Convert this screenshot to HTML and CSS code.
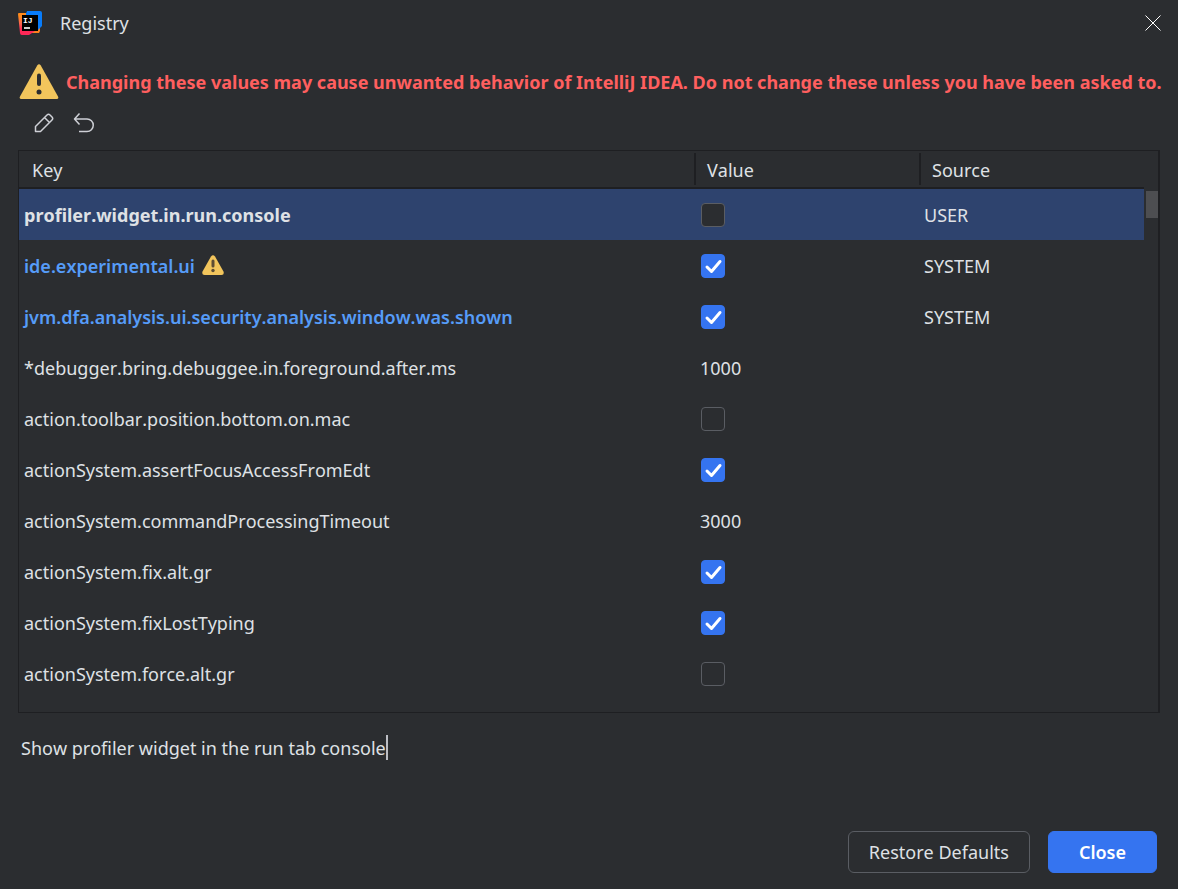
FILE: index.html
```
<!DOCTYPE html>
<html lang="en">
<head>
  <meta charset="UTF-8">
  <meta name="viewport" content="width=device-width, initial-scale=1.0">
  <title>Registry</title>
  <link rel="stylesheet" href="styles.css">
</head>
<body>
  <header class="titlebar">
    <svg class="logo" viewBox="0 0 24 24" aria-hidden="true">
      <defs>
        <linearGradient id="warm" x1="0" y1="0" x2="0" y2="1">
          <stop offset="0.15" stop-color="#ff8a1c"/>
          <stop offset="0.45" stop-color="#fb6a4c"/>
          <stop offset="0.75" stop-color="#fe2857"/>
        </linearGradient>
      </defs>
      <path d="M14 15h8v5l-1 2h-7z" fill="#fc801d"/>
      <path d="M9 0h13q2 0 2 2v13l-4 4L7 5z" fill="#087cfa"/>
      <path d="M0 3q0-1 1-1h7v18h9l-6 4H4q-2 0-2-2z" fill="url(#warm)"/>
      <rect x="4" y="4" width="16" height="16" fill="#000"/>
      <text class="logo-text" x="5" y="12">IJ</text>
      <rect x="6" y="16" width="6" height="2" fill="#ccc"/>
    </svg>
    <h1>Registry</h1>
    <button class="close-x" aria-label="Close window">
      <svg width="16" height="16" viewBox="0 0 16 16"><path d="M0.5 0.5l15 15M15.500 0.5l-15 15"/></svg>
    </button>
  </header>

  <main>
    <div class="warning">
      <svg width="40" height="36" viewBox="0 0 40 36" aria-hidden="true">
        <path d="M18.200 1.600q1.800-2.700 3.600 0L39 32.500q1.200 2.500-1.500 2.500h-35Q-0.200 35 1 32.500z" fill="#f2c55c"/>
        <path d="M20 11.500v8.500" stroke="#2b2d30" stroke-width="4" stroke-linecap="round"/>
        <circle cx="20" cy="28" r="2.500" fill="#2b2d30"/>
      </svg>
      <p>Changing these values may cause unwanted behavior of IntelliJ IDEA. Do not change these unless you have been asked to.</p>
    </div>

    <div class="toolbar">
      <button aria-label="Edit">
        <svg width="24" height="24" viewBox="0 0 24 24"><path d="M3.500 20.500v-5L15 4q1.500-1.500 3 0l2 2q1.500 1.500 0 3L8.500 20.500zM12.500 6.500l5 5"/></svg>
      </button>
      <button aria-label="Revert">
        <svg width="24" height="24" viewBox="0 0 24 24"><path d="M7.500 2.500L2.500 8l5 5.500M2.500 8H15a6.200 6.200 0 0 1 0 12.500H7"/></svg>
      </button>
    </div>

    <div class="registry">
      <table>
        <thead>
          <tr><th>Key</th><th>Value</th><th>Source</th></tr>
        </thead>
        <tbody>
          <tr class="selected">
            <td><label class="changed" for="k1">profiler.widget.in.run.console</label></td>
            <td><input type="checkbox" id="k1"></td>
            <td>USER</td>
          </tr>
          <tr>
            <td>
              <label class="changed" for="k2">ide.experimental.ui</label>
              <svg class="row-icon" width="22" height="20" viewBox="0 0 22 20" aria-hidden="true">
                <path d="M9 1.500q2-2.500 4 0l8.500 15q1 3.500-2 3.500h-17q-3 0-2-3.500z" fill="#f2c55c"/>
                <path d="M11 6v5" stroke="#5e4d33" stroke-width="3" stroke-linecap="round"/>
                <circle cx="11" cy="15.500" r="1.700" fill="#5e4d33"/>
              </svg>
            </td>
            <td><input type="checkbox" id="k2" checked></td>
            <td>SYSTEM</td>
          </tr>
          <tr>
            <td><label class="changed" for="k3">jvm.dfa.analysis.ui.security.analysis.window.was.shown</label></td>
            <td><input type="checkbox" id="k3" checked></td>
            <td>SYSTEM</td>
          </tr>
          <tr>
            <td>*debugger.bring.debuggee.in.foreground.after.ms</td>
            <td>1000</td>
            <td></td>
          </tr>
          <tr>
            <td><label for="k5">action.toolbar.position.bottom.on.mac</label></td>
            <td><input type="checkbox" id="k5"></td>
            <td></td>
          </tr>
          <tr>
            <td><label for="k6">actionSystem.assertFocusAccessFromEdt</label></td>
            <td><input type="checkbox" id="k6" checked></td>
            <td></td>
          </tr>
          <tr>
            <td>actionSystem.commandProcessingTimeout</td>
            <td>3000</td>
            <td></td>
          </tr>
          <tr>
            <td><label for="k8">actionSystem.fix.alt.gr</label></td>
            <td><input type="checkbox" id="k8" checked></td>
            <td></td>
          </tr>
          <tr>
            <td><label for="k9">actionSystem.fixLostTyping</label></td>
            <td><input type="checkbox" id="k9" checked></td>
            <td></td>
          </tr>
          <tr>
            <td><label for="k10">actionSystem.force.alt.gr</label></td>
            <td><input type="checkbox" id="k10"></td>
            <td></td>
          </tr>
        </tbody>
      </table>
      <div class="scrollbar"><div class="thumb"></div></div>
    </div>

    <p class="description">Show profiler widget in the run tab console<span class="caret"></span></p>
  </main>

  <footer class="actions">
    <button class="btn">Restore Defaults</button>
    <button class="btn primary">Close</button>
  </footer>
</body>
</html>
```

FILE: styles.css
```
* { box-sizing: border-box; }
body { margin: 0; min-height: 100vh; display: flex; flex-direction: column; background: #2b2d30; color: #dfe1e5; font-family: "Noto Sans", "Open Sans", sans-serif; font-size: 18px; line-height: 24px; font-kerning: none; }
h1, p { margin: 0; }
button { font: inherit; font-kerning: none; color: inherit; background: none; border: none; padding: 0; cursor: pointer; }
svg { display: block; }

.titlebar { display: flex; align-items: center; height: 46px; padding: 0 17px 0 18px; }
.titlebar h1 { flex: 1; margin-left: 18px; font-size: 18px; font-weight: 400; }
.logo { width: 24px; height: 24px; }
.logo-text { font: bold 8px "Liberation Mono", monospace; fill: #fff; }
.close-x path { fill: none; stroke: #fff; stroke-width: 1; }

main { flex: 1; padding: 17px 18px 0; }
.warning { display: flex; align-items: center; gap: 7px; height: 38px; padding-left: 1px; color: #ff5f5f; font-weight: 700; font-kerning: normal; white-space: nowrap; }
.warning svg { flex: none; }
.toolbar { display: flex; gap: 16px; padding: 10px 14px 15px; }
.toolbar path { fill: none; stroke: #ced0d6; stroke-width: 1.5; stroke-linejoin: round; }

.registry { display: flex; padding-bottom: 13px; border: 1px solid #1e1f22; border-right-width: 2px; }
table { flex: 1; table-layout: fixed; border-collapse: separate; border-spacing: 0; }
th { width: 20%; height: 38px; padding: 2px 13px 0; text-align: left; font-weight: 400; border-bottom: 2px solid #1e1f22; background: linear-gradient(#1e1f22, #1e1f22) left 2px / 2px 32px no-repeat; }
th:first-child { width: 60%; background: none; }
td { height: 51px; padding: 0 5px; white-space: nowrap; }
td:nth-child(2) { padding-left: 6px; }
.selected { background: #2e436e; }
.changed { color: #569cf8; font-weight: 600; }
.selected .changed { color: #dfe1e5; font-weight: 700; }
.row-icon { display: inline-block; margin-left: 2px; vertical-align: -2px; }
.scrollbar { width: 14px; padding: 40px 0 0 2px; }
.thumb { height: 27px; background: #4d4e51; }

input[type="checkbox"] { appearance: none; display: block; width: 24px; height: 24px; margin: 0 1px; border: 1px solid #5a5d63; border-radius: 4px; background: #2b2d30; }
input[type="checkbox"]:checked { border-color: #3574f0; background: #3574f0 url("data:image/svg+xml,%3Csvg xmlns='http://www.w3.org/2000/svg' viewBox='0 0 22 22'%3E%3Cpath d='M5 12l4.500 4.500L18 6.500' fill='none' stroke='white' stroke-width='3' stroke-linecap='round' stroke-linejoin='round'/%3E%3C/svg%3E") center / 22px no-repeat; }

.description { display: flex; align-items: center; padding: 22px 3px 0; }
.caret { width: 2px; height: 25px; background: #bcbec4; }

.actions { display: flex; justify-content: flex-end; gap: 18px; padding: 16px 21px 16px; }
.btn { height: 42px; padding: 0 20px; border: 1px solid #5a5d63; border-radius: 6px; }
.primary { padding: 0 30px; border-color: #3574f0; background: #3574f0; color: #fff; font-weight: 600; }
```
